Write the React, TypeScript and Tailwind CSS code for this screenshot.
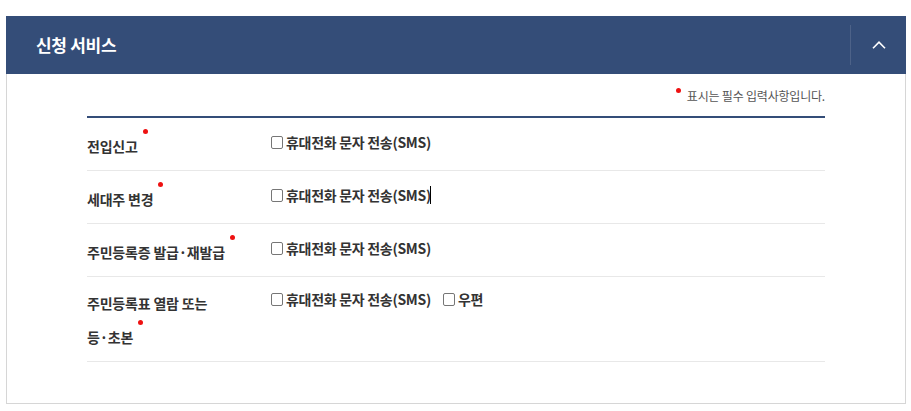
const FONT = 'font-["Noto_Sans_CJK_KR","Noto_Sans",sans-serif]'

type Row = {
  label: React.ReactNode
  options: { text: string; caret?: boolean }[]
  pad: string
}

const rows: Row[] = [
  { label: '전입신고', options: [{ text: '휴대전화 문자 전송(SMS)' }], pad: 'pt-[11px] pb-[7px]' },
  { label: '세대주 변경', options: [{ text: '휴대전화 문자 전송(SMS)', caret: true }], pad: 'pt-[11px] pb-[7px]' },
  { label: '주민등록증 발급·재발급', options: [{ text: '휴대전화 문자 전송(SMS)' }], pad: 'pt-[11px] pb-[7px]' },
  {
    label: (
      <>
        주민등록표 열람 또는
        <br />
        등·초본
      </>
    ),
    options: [{ text: '휴대전화 문자 전송(SMS)' }, { text: '우편' }],
    pad: 'pt-[9px] pb-[7px]',
  },
]

function Dot(): React.JSX.Element {
  return <span className="ml-[5px] inline-block h-[5px] w-[5px] rounded-full bg-[#ee1111] align-top" />
}

function Check({ text, caret }: { text: string; caret?: boolean }): React.JSX.Element {
  return (
    <label className="mr-[12px] inline-flex items-center">
      <span className="h-[13px] w-[12px] shrink-0 rounded-[2px] border border-[#767676] bg-white" />
      <span className="ml-[3px] text-[14px] font-bold tracking-[-0.3px] text-[#333]">{text}</span>
      {caret && <span className="ml-[-1px] inline-block h-[18px] w-px bg-black" />}
    </label>
  )
}

export default function App(): React.JSX.Element {
  return (
    <div className={`min-h-[411px] bg-white pt-[16px] ${FONT}`}>
      <div className="ml-[6px] w-[900px] border-x border-b border-[#d6d6d6]">
        <div className="-mx-px flex h-[58px] items-center bg-[#344d78]">
          <h2 className="flex-1 pl-[30px] text-[17px] font-bold tracking-[-0.3px] text-white">신청 서비스</h2>
          <div className="h-[40px] w-px bg-[#4d6288]" />
          <button className="flex h-full w-[55px] items-center justify-center">
            <svg viewBox="0 0 14 8" className="h-[8px] w-[14px]" fill="none" stroke="white" strokeWidth="1.6">
              <path d="M1 7.2L7 1.2l6 6" />
            </svg>
          </button>
        </div>

        <div className="px-[80px] pb-[41px]">
          <p className="flex justify-end pt-[12px] pb-[10px] text-[12px] leading-[20px] tracking-[-0.2px] text-[#555]">
            <span className="mr-[6px] mt-[2px] inline-block h-[5px] w-[5px] rounded-full bg-[#ee1111]" />
            표시는 필수 입력사항입니다.
          </p>
          <div className="border-t-2 border-[#344d78]">
            {rows.map((row, i) => (
              <div key={i} className={`flex items-start border-b border-[#e8e8e8] ${row.pad}`}>
                <div className="w-[184px] shrink-0 text-[14px] font-bold leading-[34px] tracking-[-0.2px] text-[#333]">
                  {row.label}
                  <Dot />
                </div>
                <div className="flex items-start pt-[1px] leading-[24px]">
                  {row.options.map((o) => (
                    <Check key={o.text} text={o.text} caret={o.caret} />
                  ))}
                </div>
              </div>
            ))}
          </div>
        </div>
      </div>
    </div>
  )
}
